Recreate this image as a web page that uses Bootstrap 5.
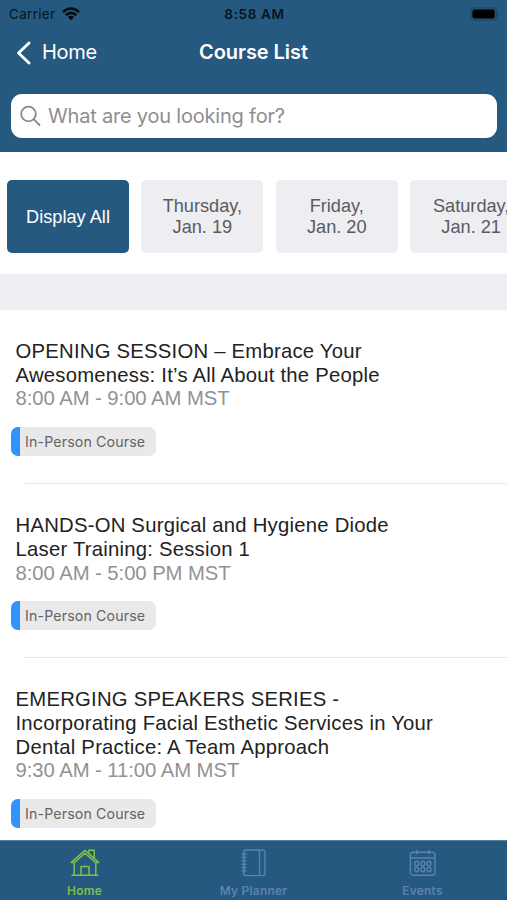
<!DOCTYPE html>
<html lang="en">
<head>
<meta charset="utf-8">
<meta name="viewport" content="width=device-width, initial-scale=1">
<title>Course List</title>
<link href="https://cdn.jsdelivr.net/npm/bootstrap@5.3.0/dist/css/bootstrap.min.css" rel="stylesheet">
<style>
:root { --brand: #26597f; --mist: #eeedf2; }
body { font-family: "Liberation Sans", Arial, sans-serif; background: #fff; }
.app { height: 900px; }
.ios { font-family: Inter, Roboto, sans-serif; }
.top-area { background: var(--brand); height: 152px; }
.status-row { height: 28px; font-size: 13.5px; line-height: 28px; color: #07131d; padding: 0 7px 0 9px; }
.status-row .carrier { letter-spacing: .3px; }
.status-row .clock { font-weight: 600; letter-spacing: .65px; }
.title-row { height: 48px; padding: 0 16px; font-size: 20px; line-height: 49px; }
.title-row .heading { font-size: 20px; line-height: 49px; font-weight: 600; letter-spacing: -.05px; }
.back-link { letter-spacing: -.3px; gap: 11px; }
.search-box { height: 44px; margin: 18px 10px 0 11px; border-radius: 11px; padding-left: 9px; gap: 7px; }
.search-box .form-control { font-size: 20px; color: #8e8e90; letter-spacing: -.2px; }
.search-box .form-control::placeholder { color: #8e8e90; opacity: 1; }
.day-strip { height: 122px; padding: 28px 0 0 7px; gap: 12.4px; }
.day-chip { width: 122px; height: 73px; border-radius: 5px; background: var(--mist); color: #5b5b5e; font-size: 18.2px; line-height: 21px; padding: 1px 0 0; border: 0; }
.day-chip.active { background: var(--brand) !important; color: #fff !important; }
.band { height: 36px; background: var(--mist); }
.course { padding: 30px 0 27px 15.5px; }
.course h2 { font-size: 20.3px; line-height: 23.7px; color: #222; font-weight: 400; letter-spacing: .23px; }
.course .hours { font-size: 20.3px; line-height: 23.7px; color: #929294; margin-bottom: 16px; letter-spacing: -.06px; }
.course-tag { height: 29px; width: 145px; margin-left: -4.5px; border-radius: 7px; background: #e9e9e9; color: #646464; font-size: 14.2px; letter-spacing: .14px; line-height: 29px; overflow: hidden; }
.course-tag::before { content: ""; width: 9px; background: #2f94fb; margin-right: 5px; }
.rule { height: 1px; margin: 0 0 0 25px; background: #e6e6e8; }
.tabs { height: 60px; background: var(--brand); border-top: 1px solid #59819e; }
.tab-item { color: #5983b2; font-size: 12px; line-height: 14px; font-weight: 600; letter-spacing: .2px; padding-top: 6px; gap: 7px; }
.tab-item.current { color: #82bd4f; }
.tab-item svg { display: block; }
</style>
<script src="https://cdn.jsdelivr.net/npm/bootstrap@5.3.0/dist/js/bootstrap.bundle.min.js"></script>
</head>
<body>
<div class="app d-flex flex-column overflow-hidden">
  <header class="top-area ios flex-shrink-0">
    <div class="status-row row g-0 align-items-center">
      <div class="col d-flex align-items-center">
        <span class="carrier">Carrier</span>
        <svg style="margin-left:7px" width="18" height="14" viewBox="0 0 18 14" fill="none" stroke="#03090e" stroke-width="2.5"><path d="M1 5Q9-2 17 5M3.8 8.1Q9 3.6 14.2 8.1"/><path d="M9 13.2 5.9 10.1Q9 7.6 12.1 10.1Z" fill="#03090e" stroke="none"/></svg>
      </div>
      <div class="col-auto clock">8:58 AM</div>
      <div class="col d-flex justify-content-end">
        <svg width="30" height="14" viewBox="0 0 30 14"><rect x=".8" y=".8" width="25.6" height="12.4" rx="3.6" fill="none" stroke="#1d4461" stroke-width="1.2"/><rect x="2.4" y="2.4" width="22.4" height="9.2" rx="2" fill="#000"/><path d="M28 5q1.6 2 0 4z" fill="#1d4461"/></svg>
      </div>
    </div>
    <nav class="title-row row g-0 text-white">
      <a href="#" class="back-link col d-flex align-items-center text-white text-decoration-none">
        <svg width="15" height="24" viewBox="0 0 15 24" fill="none" stroke="#fff" stroke-width="2.9" stroke-linecap="round" stroke-linejoin="round"><path d="M13 2 2.6 12 13 22"/></svg>
        <span>Home</span>
      </a>
      <h1 class="heading col-auto mb-0">Course List</h1>
      <div class="col"></div>
    </nav>
    <div class="search-box d-flex align-items-center bg-white">
      <svg class="flex-shrink-0" width="21" height="22" viewBox="0 0 21 22" fill="none" stroke="#89898b" stroke-width="1.8" stroke-linecap="round"><circle cx="8.5" cy="9" r="7.3"/><path d="m13.9 14.4 5.6 5.6"/></svg>
      <input class="form-control border-0 bg-transparent p-0 shadow-none" type="text" placeholder="What are you looking for?" aria-label="Search">
    </div>
  </header>

  <div class="day-strip d-flex flex-shrink-0 overflow-hidden">
    <button class="btn day-chip active flex-shrink-0">Display All</button>
    <button class="btn day-chip flex-shrink-0">Thursday,<br>Jan. 19</button>
    <button class="btn day-chip flex-shrink-0">Friday,<br>Jan. 20</button>
    <button class="btn day-chip flex-shrink-0">Saturday,<br>Jan. 21</button>
  </div>
  <div class="band flex-shrink-0"></div>

  <main class="flex-grow-1 overflow-hidden">
    <article class="course">
      <h2 class="mb-0">OPENING SESSION – Embrace Your<br>Awesomeness: It’s All About the People</h2>
      <p class="hours">8:00 AM - 9:00 AM MST</p>
      <div class="course-tag ios d-flex">In-Person Course</div>
    </article>
    <div class="rule"></div>
    <article class="course">
      <h2 class="mb-0">HANDS-ON Surgical and Hygiene Diode<br>Laser Training: Session 1</h2>
      <p class="hours">8:00 AM - 5:00 PM MST</p>
      <div class="course-tag ios d-flex">In-Person Course</div>
    </article>
    <div class="rule"></div>
    <article class="course">
      <h2 class="mb-0">EMERGING SPEAKERS SERIES -<br>Incorporating Facial Esthetic Services in Your<br>Dental Practice: A Team Approach</h2>
      <p class="hours">9:30 AM - 11:00 AM MST</p>
      <div class="course-tag ios d-flex">In-Person Course</div>
    </article>
  </main>

  <nav class="tabs ios row g-0 flex-shrink-0">
    <a href="#" class="tab-item current col d-flex flex-column align-items-center text-decoration-none">
      <svg width="30" height="30" viewBox="0 0 30 30" fill="none" stroke="currentColor" stroke-width="1.5" stroke-linejoin="round"><path d="M1.5 28.2h27M4.2 28V15.6M25.8 28V15.6M1.3 15.4 15 3.4l13.7 12H25.4L15 6.2 4.6 15.4zM18.8 6.4V3.2h5.4v8M11 28.2v-8.6h8v8.6z"/></svg>
      <span>Home</span>
    </a>
    <a href="#" class="tab-item col d-flex flex-column align-items-center text-decoration-none">
      <svg width="30" height="30" viewBox="0 0 30 30" fill="none" stroke="currentColor" stroke-width="1.4"><rect x="4.8" y="3" width="21.2" height="25.6" rx="2.5"/><path d="M20.5 3v25.6" stroke-width="1.3"/><path d="M3.3 7h3.6M3.3 10.4h3.6M3.3 13.8h3.6M3.3 17.2h3.6M3.3 20.6h3.6M3.3 24h3.6" stroke-width="1.6" stroke-linecap="round"/></svg>
      <span>My Planner</span>
    </a>
    <a href="#" class="tab-item col d-flex flex-column align-items-center text-decoration-none">
      <svg width="30" height="30" viewBox="0 0 30 30" fill="none" stroke="currentColor" stroke-width="1.4"><rect x="2.4" y="5.2" width="24.6" height="23" rx="2.8"/><path d="M3 11h24M9 3v4.6M21 3v4.6"/><g stroke-width="1.4"><ellipse cx="8.6" cy="16.6" rx="2" ry="2.3"/><ellipse cx="14.8" cy="16.6" rx="2" ry="2.3"/><ellipse cx="21" cy="16.6" rx="2" ry="2.3"/><ellipse cx="8.6" cy="22.4" rx="2" ry="2.3"/><ellipse cx="14.8" cy="22.4" rx="2" ry="2.3"/><ellipse cx="21" cy="22.4" rx="2" ry="2.3"/></g></svg>
      <span>Events</span>
    </a>
  </nav>
</div>
</body>
</html>
